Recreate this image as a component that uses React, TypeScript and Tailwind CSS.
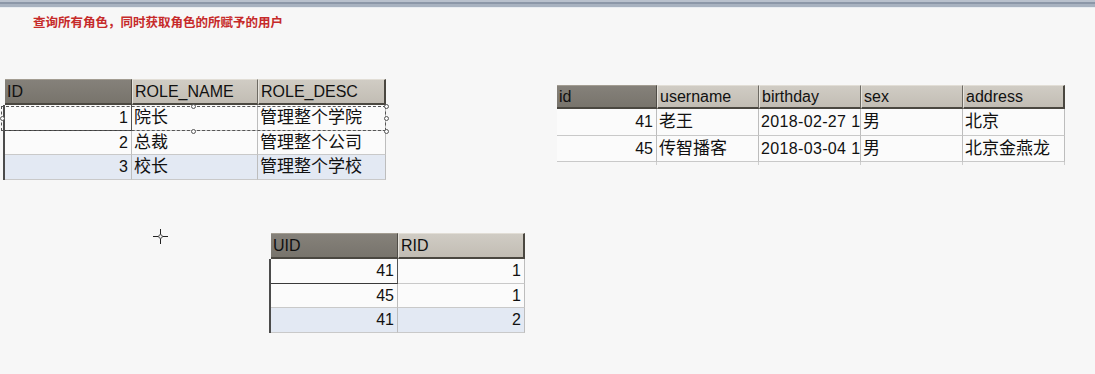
import React from "react";

type Cell = { t: string; right?: boolean; cjk?: boolean; sel?: boolean; wide?: boolean };

type GridProps = {
  widths: number[];
  heads: string[];
  rows: Cell[][];
  headH: number;
  rowH: number[];
  edge?: boolean;
  tail?: number;
  alt?: number;
};

const FONT = '"Liberation Sans", "Noto Sans CJK SC", sans-serif';

function Grid({ widths, heads, rows, headH, rowH, edge, tail, alt }: GridProps) {
  return (
    <div className="flex flex-col" style={{ fontFamily: FONT }}>
      {/* column header strip */}
      <div className={`flex ${edge ? "ml-[2px]" : ""}`}>
        {heads.map((h, i) => (
          <div
            key={h}
            style={{ width: widths[i], height: headH }}
            className={`flex items-center pl-[2px] pt-[1px] text-[16px] text-[#111] border-t border-b-2 border-b-[#4a4740] ${
              i === 0
                ? "bg-gradient-to-b from-[#85817a] to-[#78746c] border-t-[#a39d92] border-r border-r-[#4f4c46]"
                : i === heads.length - 1
                ? "bg-gradient-to-b from-[#d0ccc4] to-[#c2bdb4] border-t-[#e2ded6] border-l border-l-[#e6e3dc] border-r-2 border-r-[#4a4740]"
                : "bg-gradient-to-b from-[#d0ccc4] to-[#c2bdb4] border-t-[#e2ded6] border-l border-l-[#e6e3dc] border-r border-r-[#6d6a63]"
            }`}
          >
            {h}
          </div>
        ))}
      </div>
      {/* data rows */}
      <div className={`flex flex-col ${edge ? "border-l-2 border-l-[#4b4b4b]" : ""}`}>
        {rows.map((r, ri) => (
          <div
            key={ri}
            className={`flex ${ri === alt ? "bg-[#e3e9f3]" : "bg-[#fbfbfb]"}`}
          >
            {r.map((c, ci) => (
              <div
                key={ci}
                style={{ width: widths[ci], height: rowH[ri] }}
                className={`flex items-center overflow-hidden whitespace-nowrap text-[#111] border-b ${
                  c.sel
                    ? "border-b-[#3a3a3a] border-r border-r-[#555]"
                    : "border-b-[#c9c9c9] border-r border-r-[#bdbdbd]"
                } ${c.right ? "justify-end pr-[3px]" : "pl-[2px]"} ${
                  c.cjk ? "text-[17px]" : "text-[16px]"
                } ${c.wide ? "tracking-[0.35px]" : ""}`}
              >
                {c.t}
              </div>
            ))}
          </div>
        ))}
        {tail ? (
          <div className="flex">
            {widths.map((w, i) => (
              <div
                key={i}
                style={{ width: w, height: tail }}
                className="border-r border-r-[#cfcfcf]"
              />
            ))}
          </div>
        ) : null}
      </div>
    </div>
  );
}

function Crosshair() {
  return (
    <svg width="17" height="17" viewBox="0 0 17 17" className="absolute left-[152px] top-[228px]">
      <path d="M8.5 1v5.5M8.5 10.5V16M1 8.5h5.5M10.5 8.5H16" stroke="#222" strokeWidth="1" />
      <circle cx="8.5" cy="8.5" r="1.8" fill="none" stroke="#444" strokeWidth="1" />
    </svg>
  );
}

function Handle({ x, y }: { x: number; y: number }) {
  return (
    <div
      style={{ left: x - 2, top: y - 2 }}
      className="absolute w-[5px] h-[5px] rounded-full border border-[#555] bg-[#fbfbfb]"
    />
  );
}

export default function App() {
  const roles: Cell[][] = [
    [{ t: "1", right: true, sel: true }, { t: "院长", cjk: true }, { t: "管理整个学院", cjk: true }],
    [{ t: "2", right: true }, { t: "总裁", cjk: true }, { t: "管理整个公司", cjk: true }],
    [{ t: "3", right: true }, { t: "校长", cjk: true }, { t: "管理整个学校", cjk: true }],
  ];
  const users: Cell[][] = [
    [
      { t: "41", right: true },
      { t: "老王", cjk: true },
      { t: "2018-02-27 1", wide: true },
      { t: "男", cjk: true },
      { t: "北京", cjk: true },
    ],
    [
      { t: "45", right: true },
      { t: "传智播客", cjk: true },
      { t: "2018-03-04 1", wide: true },
      { t: "男", cjk: true },
      { t: "北京金燕龙", cjk: true },
    ],
  ];
  const links: Cell[][] = [
    [{ t: "41", right: true, sel: true }, { t: "1", right: true }],
    [{ t: "45", right: true }, { t: "1", right: true }],
    [{ t: "41", right: true }, { t: "2", right: true }],
  ];

  return (
    <div className="relative w-[1095px] h-[374px] overflow-hidden bg-[#f7f7f7]">
      {/* window frame strip */}
      <div className="h-[2px] bg-[#b9c1cd]" />
      <div className="h-[2px] bg-[#8c97a8]" />
      <div className="h-[3px] bg-[#a8b2c0]" />
      <div className="h-[1px] bg-[#e9edf1]" />

      <div
        className="pl-[33px] pt-[7px] text-[12.5px] leading-[14px] font-bold text-[#c62a2a]"
        style={{ fontFamily: '"Noto Sans CJK SC", sans-serif' }}
      >
        查询所有角色，同时获取角色的所赋予的用户
      </div>

      <div className="flex items-start mt-[50px]">
        <div className="relative ml-[3px]">
          <Grid
            widths={[127, 126, 128]}
            heads={["ID", "ROLE_NAME", "ROLE_DESC"]}
            rows={roles}
            headH={26}
            rowH={[26, 24, 25]}
            edge
            alt={2}
          />
          {/* focus outline around the active row */}
          <div className="absolute left-[-2px] top-[27px] w-[385px] h-[25px] border border-dashed border-[#555]" />
          <Handle x={190} y={27} />
          <Handle x={383} y={27} />
          <Handle x={383} y={39} />
          <Handle x={190} y={52} />
          <Handle x={383} y={52} />
          <Handle x={-1} y={39} />
        </div>

        <div className="ml-[171px] mt-[6px]">
          <Grid
            widths={[100, 102, 102, 102, 102]}
            heads={["id", "username", "birthday", "sex", "address"]}
            rows={users}
            headH={24}
            rowH={[27, 26]}
            tail={3}
          />
        </div>
      </div>

      <div className="flex mt-[53px]">
        <div className="ml-[269px]">
          <Grid
            widths={[127, 127]}
            heads={["UID", "RID"]}
            rows={links}
            headH={26}
            rowH={[25, 24, 25]}
            edge
            alt={2}
          />
        </div>
      </div>

      <Crosshair />
    </div>
  );
}
